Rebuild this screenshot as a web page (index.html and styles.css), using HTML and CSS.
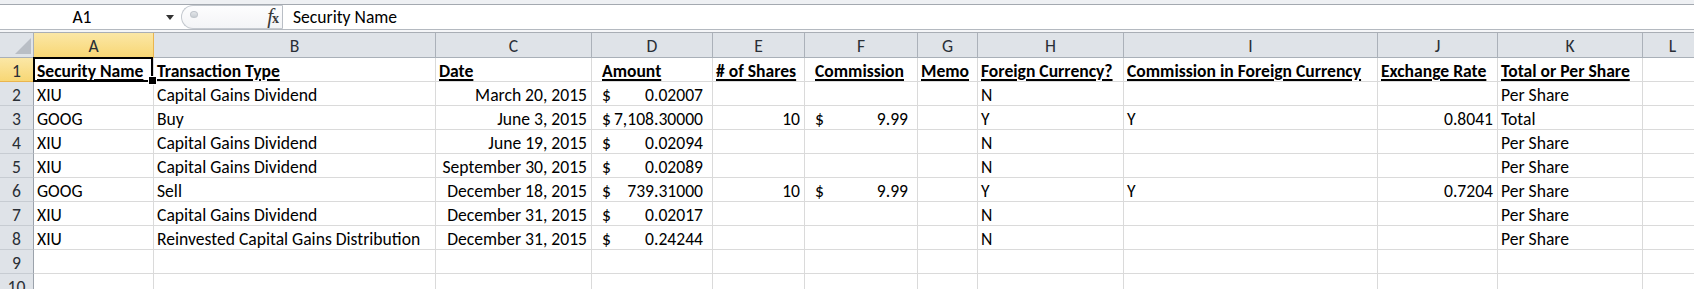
FILE: index.html
```html
<!DOCTYPE html>
<html lang="en">
<head>
  <meta charset="UTF-8" />
  <title>Transactions - Excel</title>
  <link rel="stylesheet" href="styles.css">
</head>
<body>

<div class="top-strip"></div>

<div class="formula-bar">
  <div class="name-box">
    <span class="ref">A1</span>
    <span class="arrow"></span>
  </div>
  <div class="fx-area">
    <span class="grip"></span>
    <span class="fx"><i>f</i><small>x</small></span>
  </div>
  <div class="formula">Security Name</div>
</div>

<div class="bar-gap"></div>

<div class="sheet">
  <!-- column headers -->
  <div class="corner">
    <svg width="18" height="17" viewBox="0 0 18 17"><polygon points="17,0 17,16 1,16" fill="#b9bec5"/></svg>
  </div>
  <div class="ch sel">A</div>
  <div class="ch">B</div>
  <div class="ch">C</div>
  <div class="ch">D</div>
  <div class="ch">E</div>
  <div class="ch">F</div>
  <div class="ch">G</div>
  <div class="ch">H</div>
  <div class="ch">I</div>
  <div class="ch">J</div>
  <div class="ch">K</div>
  <div class="ch">L</div>

  <!-- row 1 -->
  <div class="rh sel">1</div>
  <div class="c b active"><u>Security Name</u></div>
  <div class="c b"><u>Transaction Type</u></div>
  <div class="c b"><u>Date</u></div>
  <div class="c b acct"><u>Amount</u></div>
  <div class="c b"><u># of Shares</u></div>
  <div class="c b acct"><u>Commission</u></div>
  <div class="c b"><u>Memo</u></div>
  <div class="c b"><u>Foreign Currency?</u></div>
  <div class="c b"><u>Commission in Foreign Currency</u></div>
  <div class="c b"><u>Exchange Rate</u></div>
  <div class="c b"><u>Total or Per Share</u></div>
  <div class="c"></div>

  <!-- row 2 -->
  <div class="rh">2</div>
  <div class="c">XIU</div>
  <div class="c">Capital Gains Dividend</div>
  <div class="c r">March 20, 2015</div>
  <div class="c acct"><span>$</span><span>0.02007</span></div>
  <div class="c"></div>
  <div class="c"></div>
  <div class="c"></div>
  <div class="c">N</div>
  <div class="c"></div>
  <div class="c"></div>
  <div class="c">Per Share</div>
  <div class="c"></div>

  <!-- row 3 -->
  <div class="rh">3</div>
  <div class="c">GOOG</div>
  <div class="c">Buy</div>
  <div class="c r">June 3, 2015</div>
  <div class="c acct"><span>$</span><span>7,108.30000</span></div>
  <div class="c r">10</div>
  <div class="c acct"><span>$</span><span>9.99</span></div>
  <div class="c"></div>
  <div class="c">Y</div>
  <div class="c">Y</div>
  <div class="c r">0.8041</div>
  <div class="c">Total</div>
  <div class="c"></div>

  <!-- row 4 -->
  <div class="rh">4</div>
  <div class="c">XIU</div>
  <div class="c">Capital Gains Dividend</div>
  <div class="c r">June 19, 2015</div>
  <div class="c acct"><span>$</span><span>0.02094</span></div>
  <div class="c"></div>
  <div class="c"></div>
  <div class="c"></div>
  <div class="c">N</div>
  <div class="c"></div>
  <div class="c"></div>
  <div class="c">Per Share</div>
  <div class="c"></div>

  <!-- row 5 -->
  <div class="rh">5</div>
  <div class="c">XIU</div>
  <div class="c">Capital Gains Dividend</div>
  <div class="c r">September 30, 2015</div>
  <div class="c acct"><span>$</span><span>0.02089</span></div>
  <div class="c"></div>
  <div class="c"></div>
  <div class="c"></div>
  <div class="c">N</div>
  <div class="c"></div>
  <div class="c"></div>
  <div class="c">Per Share</div>
  <div class="c"></div>

  <!-- row 6 -->
  <div class="rh">6</div>
  <div class="c">GOOG</div>
  <div class="c">Sell</div>
  <div class="c r">December 18, 2015</div>
  <div class="c acct"><span>$</span><span>739.31000</span></div>
  <div class="c r">10</div>
  <div class="c acct"><span>$</span><span>9.99</span></div>
  <div class="c"></div>
  <div class="c">Y</div>
  <div class="c">Y</div>
  <div class="c r">0.7204</div>
  <div class="c">Per Share</div>
  <div class="c"></div>

  <!-- row 7 -->
  <div class="rh">7</div>
  <div class="c">XIU</div>
  <div class="c">Capital Gains Dividend</div>
  <div class="c r">December 31, 2015</div>
  <div class="c acct"><span>$</span><span>0.02017</span></div>
  <div class="c"></div>
  <div class="c"></div>
  <div class="c"></div>
  <div class="c">N</div>
  <div class="c"></div>
  <div class="c"></div>
  <div class="c">Per Share</div>
  <div class="c"></div>

  <!-- row 8 -->
  <div class="rh">8</div>
  <div class="c">XIU</div>
  <div class="c">Reinvested Capital Gains Distribution</div>
  <div class="c r">December 31, 2015</div>
  <div class="c acct"><span>$</span><span>0.24244</span></div>
  <div class="c"></div>
  <div class="c"></div>
  <div class="c"></div>
  <div class="c">N</div>
  <div class="c"></div>
  <div class="c"></div>
  <div class="c">Per Share</div>
  <div class="c"></div>

  <!-- row 9 -->
  <div class="rh">9</div>
  <div class="c"></div><div class="c"></div><div class="c"></div><div class="c"></div>
  <div class="c"></div><div class="c"></div><div class="c"></div><div class="c"></div>
  <div class="c"></div><div class="c"></div><div class="c"></div><div class="c"></div>

  <!-- row 10 -->
  <div class="rh">10</div>
  <div class="c"></div><div class="c"></div><div class="c"></div><div class="c"></div>
  <div class="c"></div><div class="c"></div><div class="c"></div><div class="c"></div>
  <div class="c"></div><div class="c"></div><div class="c"></div><div class="c"></div>
</div>

</body>
</html>
```

FILE: styles.css
```css
* {
  box-sizing: border-box;
}

body {
  margin: 0;
  width: 1694px;
  height: 289px;
  overflow: hidden;
  background: #ffffff;
  font-family: Carlito, Lato, 'Liberation Sans', sans-serif;
  font-size: 17.6px;
  color: #000;
}

/* ribbon edge + formula bar */
.top-strip {
  height: 5px;
  background: #eef0f3;
  border-bottom: 1px solid #a4a9b0;
}

.formula-bar {
  display: flex;
  height: 24px;
  background: #fff;
}

.name-box {
  width: 181px;
  display: flex;
  align-items: center;
  position: relative;
}

.name-box .ref {
  width: 160px;
  padding-left: 4px;
  text-align: center;
  line-height: 22px;
}

.name-box .arrow {
  width: 0;
  height: 0;
  margin-left: 6px;
  border-left: 4px solid transparent;
  border-right: 4px solid transparent;
  border-top: 5px solid #333;
}

.fx-area {
  width: 102px;
  display: flex;
  align-items: center;
  justify-content: space-between;
  padding: 0 4px 0 8px;
  border: 1px solid #c4c9cf;
  border-right-color: #b9bec5;
  border-radius: 12px 0 0 12px;
  background: linear-gradient(#fdfdfe, #f3f4f6);
}

.grip {
  width: 8px;
  height: 7px;
  border-radius: 50%;
  background: linear-gradient(#e4e7ea, #c9ced4);
  border: 1px solid #c0c5cb;
  margin-top: -5px;
}

.fx {
  font-family: 'Liberation Serif', serif;
  font-size: 21px;
  line-height: 20px;
  color: #3a3a3a;
  letter-spacing: -1px;
}

.fx small {
  font-size: 14px;
  font-weight: bold;
}

.formula {
  flex: 1;
  padding-left: 10px;
  line-height: 22px;
  display: flex;
  align-items: center;
}

.bar-gap {
  height: 4px;
  background: #f5f6f8;
  border-top: 1px solid #b4b9c0;
  border-bottom: 1px solid #a9aeb5;
}

/* worksheet grid */
.sheet {
  display: grid;
  grid-template-columns: 34px 120px 282px 156px 121px 92px 113px 60px 146px 254px 120px 145px 60px;
  grid-template-rows: 25px;
  grid-auto-rows: 24px;
}

.corner {
  background: #dfe3e8;
  border-right: 1px solid #a9b0b8;
  border-bottom: 1px solid #a9b0b8;
  display: flex;
  align-items: flex-end;
  justify-content: flex-end;
  padding: 0 1px 2px 0;
}

.ch, .rh {
  background: #dfe3e8;
  display: flex;
  align-items: center;
  justify-content: center;
  color: #2a2f36;
  line-height: 20px;
}

.ch {
  border-right: 1px solid #abb1b9;
  border-bottom: 1px solid #a9b0b8;
  padding-top: 2px;
}

.rh {
  border-right: 1px solid #9ba2ab;
  border-bottom: 1px solid #c7ccd2;
  padding-top: 2px;
}

.ch.sel, .rh.sel {
  background: linear-gradient(#fbe7a6, #f8d775);
  border-right-color: #eab54e;
  border-bottom-color: #eab54e;
}

.c {
  border-right: 1px solid #dadada;
  border-bottom: 1px solid #dadada;
  display: flex;
  align-items: flex-end;
  padding: 0 4px 0 3px;
  line-height: 20px;
  white-space: nowrap;
}

.c.r {
  justify-content: flex-end;
}

.c.acct {
  justify-content: space-between;
  padding: 0 9px 0 10px;
}

.c.b {
  font-weight: bold;
}

.c.b u {
  text-underline-offset: 2px;
  text-decoration-thickness: 1.5px;
}

/* selected cell outline and fill handle */
.c.active {
  position: relative;
  z-index: 2;
}

.c.active::after {
  content: "";
  position: absolute;
  left: -1px;
  top: -1px;
  right: 0;
  bottom: -1px;
  border: 2px solid #000;
}

.c.active::before {
  content: "";
  position: absolute;
  right: -4px;
  bottom: -4px;
  width: 7px;
  height: 7px;
  background: #000;
  border: 1px solid #fff;
  z-index: 3;
}
```
